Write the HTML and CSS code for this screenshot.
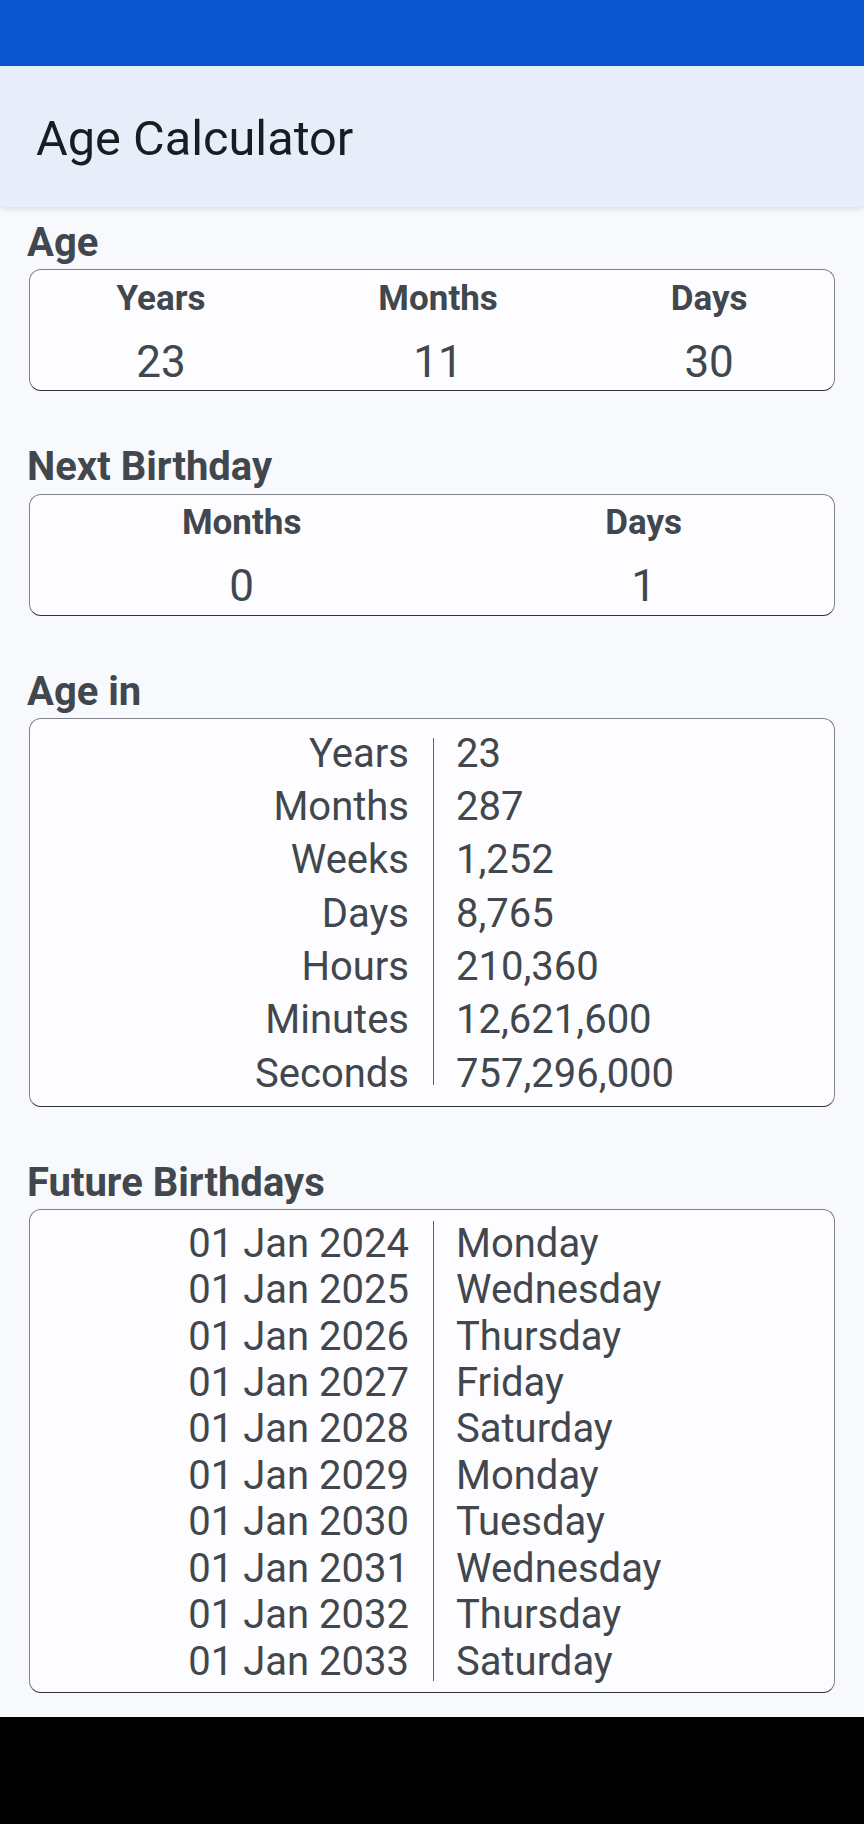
FILE: index.html
```html
<!DOCTYPE html>
<html lang="en">
<head>
    <meta charset="UTF-8">
    <meta name="viewport" content="width=device-width, initial-scale=1.0">
    <title>Age Calculator</title>
    <link rel="stylesheet" href="styles.css">
</head>
<body>
    <div class="status-bar"></div>
    <header class="app-bar">
        <h1 class="app-title">Age Calculator</h1>
    </header>

    <main class="content">
        <section class="section">
            <h2 class="section-title">Age</h2>
            <div class="card summary">
                <div class="summary-item">
                    <span class="summary-label">Years</span>
                    <span class="summary-value">23</span>
                </div>
                <div class="summary-item">
                    <span class="summary-label">Months</span>
                    <span class="summary-value">11</span>
                </div>
                <div class="summary-item">
                    <span class="summary-label">Days</span>
                    <span class="summary-value">30</span>
                </div>
            </div>
        </section>

        <section class="section">
            <h2 class="section-title">Next Birthday</h2>
            <div class="card summary">
                <div class="summary-item">
                    <span class="summary-label">Months</span>
                    <span class="summary-value">0</span>
                </div>
                <div class="summary-item">
                    <span class="summary-label">Days</span>
                    <span class="summary-value">1</span>
                </div>
            </div>
        </section>

        <section class="section">
            <h2 class="section-title">Age in</h2>
            <div class="card table age-in">
                <div class="table-divider"></div>
                <span class="cell-left">Years</span><span class="cell-right">23</span>
                <span class="cell-left">Months</span><span class="cell-right">287</span>
                <span class="cell-left">Weeks</span><span class="cell-right">1,252</span>
                <span class="cell-left">Days</span><span class="cell-right">8,765</span>
                <span class="cell-left">Hours</span><span class="cell-right">210,360</span>
                <span class="cell-left">Minutes</span><span class="cell-right">12,621,600</span>
                <span class="cell-left">Seconds</span><span class="cell-right">757,296,000</span>
            </div>
        </section>

        <section class="section">
            <h2 class="section-title">Future Birthdays</h2>
            <div class="card table future">
                <div class="table-divider"></div>
                <span class="cell-left">01 Jan 2024</span><span class="cell-right">Monday</span>
                <span class="cell-left">01 Jan 2025</span><span class="cell-right">Wednesday</span>
                <span class="cell-left">01 Jan 2026</span><span class="cell-right">Thursday</span>
                <span class="cell-left">01 Jan 2027</span><span class="cell-right">Friday</span>
                <span class="cell-left">01 Jan 2028</span><span class="cell-right">Saturday</span>
                <span class="cell-left">01 Jan 2029</span><span class="cell-right">Monday</span>
                <span class="cell-left">01 Jan 2030</span><span class="cell-right">Tuesday</span>
                <span class="cell-left">01 Jan 2031</span><span class="cell-right">Wednesday</span>
                <span class="cell-left">01 Jan 2032</span><span class="cell-right">Thursday</span>
                <span class="cell-left">01 Jan 2033</span><span class="cell-right">Saturday</span>
            </div>
        </section>
    </main>

    <div class="nav-bar"></div>
</body>
</html>
```

FILE: styles.css
```css
html, body {
    margin: 0;
    padding: 0;
}
body {
    font-family: Roboto, "Noto Sans", sans-serif;
    color: #41474d;
    background-color: #f8f9fd;
    width: 864px;
    height: 1824px;
    display: flex;
    flex-direction: column;
    overflow: hidden;
}
.status-bar {
    height: 66px;
    flex: none;
    background-color: #0b57d0;
}
.app-bar {
    height: 141px;
    flex: none;
    box-sizing: border-box;
    padding: 45px 0 0 36px;
    background-color: #e8eef9;
    box-shadow: 0 2px 6px rgba(0, 0, 0, 0.12);
    position: relative; /* keep shadow above content */
    z-index: 1;
}
.app-title {
    margin: 0;
    font-size: 48.7px;
    font-weight: 400;
    line-height: 56px;
    color: #191c20;
}
.content {
    flex: 1;
    min-height: 0;
    overflow: hidden;
    padding: 12px 29px 0;
}
.section {
    margin-bottom: 52px;
}
.section:last-child {
    margin-bottom: 0;
}
.section-title {
    margin: 0 0 3.3px -2px;
    font-size: 40px;
    font-weight: 700;
    line-height: 47px;
}
.card {
    border: 1px solid #7e8187;
    border-bottom-color: #2f3236;
    border-radius: 12px;
    background-color: #fdfdff;
}

/* three / two column summary cards */
.summary {
    display: flex;
    justify-content: space-around;
    padding: 7.5px 0 2.5px;
}
.summary-item {
    display: flex;
    flex-direction: column;
    align-items: center;
}
.summary-label {
    font-size: 35px;
    font-weight: 700;
    line-height: 41px;
}
.summary-value {
    margin-top: 17px;
    font-size: 44px;
    line-height: 52px;
}

/* label | value tables */
.table {
    display: grid;
    grid-template-columns: 403px 1px 1fr;
    font-size: 40px;
}
.age-in {
    padding: 7.7px 0 6px;
    line-height: 53.33px;
}
.future {
    padding: 10.7px 0 7.3px;
    line-height: 46.4px;
}
.cell-left {
    grid-column: 1;
    text-align: right;
    padding-right: 24px;
}
.cell-right {
    grid-column: 3;
    padding-left: 22px;
}
.table-divider {
    grid-column: 2;
    grid-row: 1 / span 10;
    background-color: #5f6368;
}
.age-in .table-divider {
    grid-row: 1 / span 7;
    margin: 11px 0 15px;
}
.future .table-divider {
    margin: 0 0 4px;
}
.nav-bar {
    height: 107px;
    flex: none;
    background-color: #000;
}
```
